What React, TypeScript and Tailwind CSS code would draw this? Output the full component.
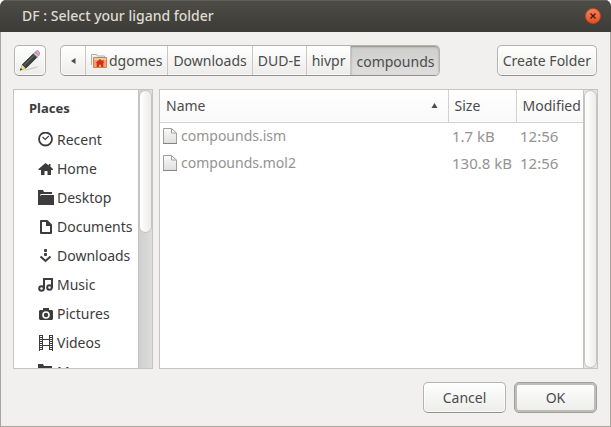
import React from "react";

const RecentIcon = () => (
  <svg width="16" height="16" viewBox="0 0 16 16" fill="none" stroke="#3c3c3c" aria-hidden="true">
    <circle cx="7.5" cy="7" r="6.5" strokeWidth="1.8" />
    <path d="M4.5 5 7.2 7.500 10.8 4" strokeWidth="1.1" />
  </svg>
);

const HomeIcon = () => (
  <svg width="16" height="16" viewBox="0 0 16 16" fill="#3c3c3c" aria-hidden="true">
    <path d="M7.5 2 .5 8v1H3v5h3.5v-4h3v4H13V9h2V8l-2.500-2.200V3H10.800v1.500z" />
  </svg>
);

const FolderIcon = () => (
  <svg width="16" height="16" viewBox="0 0 16 16" fill="#3c3c3c" aria-hidden="true">
    <path d="M0 0h5l1 2h8v2H3L2 5v9H0z" />
    <path d="M3 5H16v10H0v-1h2V6z" />
  </svg>
);

const DocumentIcon = () => (
  <svg width="16" height="16" viewBox="0 0 16 16" aria-hidden="true">
    <path d="M3 2h6l4 4v8H3z" fill="none" stroke="#3c3c3c" strokeWidth="2" strokeLinejoin="round" />
    <path d="M8 1.500 13.500 7H8z" fill="#3c3c3c" />
  </svg>
);

const DownloadIcon = () => (
  <svg width="16" height="16" viewBox="0 0 16 16" fill="#3c3c3c" aria-hidden="true">
    <rect x="6" y="1" width="3" height="3" rx="1" />
    <rect x="6" y="5" width="3" height="3" rx="1" />
    <path d="M2.500 8.500 7.500 13l5-4.500" fill="none" stroke="#3c3c3c" strokeWidth="2" />
  </svg>
);

const MusicIcon = () => (
  <svg width="16" height="16" viewBox="0 0 16 16" fill="none" stroke="#3c3c3c" strokeWidth="2" aria-hidden="true">
    <path d="M6 12V2h8v9" />
    <circle cx="3.500" cy="11.500" r="2.300" />
    <circle cx="11.500" cy="10.500" r="2.300" />
  </svg>
);

const CameraIcon = () => (
  <svg width="16" height="16" viewBox="0 0 16 16" fill="#3c3c3c" aria-hidden="true">
    <path d="M5 2h6v2h3l1 1v8l-1 1H2l-1-1V5l1-1h3z" />
    <circle cx="8" cy="9" r="3" fill="none" stroke="#fff" strokeWidth="1.600" />
  </svg>
);

const VideoIcon = () => (
  <svg width="16" height="16" viewBox="0 0 16 16" fill="none" stroke="#3c3c3c" aria-hidden="true">
    <path d="M1.500 0v16M4.500 0v15M11.500 0v15M14.500 0v16M4 4.500h8M4 10.500h8" />
    <path d="M3 0v16M13 0v16" strokeWidth="2" strokeDasharray="1 1" />
  </svg>
);

const PencilIcon = () => (
  <svg width="24" height="24" viewBox="0 0 24 24" aria-hidden="true">
    <path d="M4 22q10-4 17-5-3 3-17 5z" fill="#bdbdb9" opacity=".7" />
    <path d="M2 21.500 4.300 15.500 8 19.200z" fill="#f0e48f" stroke="#a79d55" strokeWidth=".6" />
    <path d="M2 21.500l.8-2.400 1.500 1.400z" fill="#222" />
    <path d="M4.300 15.500 15.500 4.700 19 8.200 8 19.200z" fill="#3d4040" stroke="#222" strokeWidth=".7" />
    <path d="M6.300 16.200 16.500 6" stroke="#757b7b" strokeWidth="1" />
    <path d="m15.500 4.700 1.700-1.700L20.700 6.500 19 8.200z" fill="#c6c9c7" stroke="#777" strokeWidth=".5" />
    <path d="m17.200 3 .6-.7q1.600-1.400 3 0t.5 3.400l-.6.8z" fill="#e4a3d5" stroke="#ad649e" strokeWidth=".6" />
  </svg>
);

const HomeFolderIcon = () => (
  <svg width="16" height="16" viewBox="0 0 16 16" aria-hidden="true">
    <path d="M.5 12V1.500h5l1 1.500h7v4" fill="#f3f3f1" stroke="#b0b0ab" />
    <path d="M2.500 4.500h13v10h-13z" fill="#f2a076" stroke="#dd7a50" />
    <path d="M3 5h12v2H3z" fill="#f8c3a4" />
    <path d="m9 6-4.500 4h1.200v4h2.300v-2.200h2V14h2.300v-4h1.200l-1-1V7h-1.200v1.200z" fill="#c6380f" />
  </svg>
);

const FileIcon = () => (
  <svg width="14" height="16" viewBox="0 0 14 16" aria-hidden="true">
    <defs>
      <linearGradient id="sheet" x1="0" y1="0" x2="0" y2="1">
        <stop offset="0" stopColor="#fafafa" />
        <stop offset="1" stopColor="#dedede" />
      </linearGradient>
    </defs>
    <path d="M.5.500h8l5 5v10H.5z" fill="url(#sheet)" stroke="#a09f9b" />
    <path d="M8.500.500v4.500h5z" fill="#fff" stroke="#a09f9b" strokeLinejoin="round" />
    <path d="M0 15.500h14" stroke="#858480" />
  </svg>
);

const places = [
  { label: "Recent", Icon: RecentIcon },
  { label: "Home", Icon: HomeIcon },
  { label: "Desktop", Icon: FolderIcon },
  { label: "Documents", Icon: DocumentIcon },
  { label: "Downloads", Icon: DownloadIcon },
  { label: "Music", Icon: MusicIcon },
  { label: "Pictures", Icon: CameraIcon },
  { label: "Videos", Icon: VideoIcon },
  { label: "Maps", Icon: FolderIcon },
];

const files = [
  { name: "compounds.ism", size: "1.7 kB", modified: "12:56" },
  { name: "compounds.mol2", size: "130.8 kB", modified: "12:56" },
];

const button =
  "h-[31px] rounded-[5px] border border-[#b4b3ae] border-b-[#92918d] bg-linear-to-b from-white to-[#ececea] shadow-[inset_0_0_0_1px_#ffffffb0]";
const crumb = "flex h-full items-center border-r border-[#c9c8c5] px-[5px]";

export default function App() {
  return (
    <div className="bg-white">
      <div className="flex h-screen flex-col overflow-hidden rounded-t-[6px] bg-[#f1f0ee] font-['Noto_Sans',sans-serif] text-[14px] leading-5 text-[#4c4c4c]">
        <header className="flex h-8 shrink-0 items-center justify-between bg-linear-to-b from-[#4d4c46] to-[#3c3b37] pr-2.5 pl-[22px] shadow-[inset_0_1px_0_#5f5e58]">
          <h1 className="font-medium text-[#dfdbd2]">DF : Select your ligand folder</h1>
          <button aria-label="Close" className="flex size-4 items-center justify-center rounded-full border border-[#c9441c] bg-linear-to-b from-[#f58260] to-[#e2501d]">
            <svg width="6" height="6" viewBox="0 0 6 6" stroke="#3b1c12" strokeWidth="1.200" aria-hidden="true">
              <path d="m.5.500 5 5M5.500.500l-5 5" />
            </svg>
          </button>
        </header>

        <main className="flex min-h-0 flex-1 flex-col gap-[13px] border-x border-b border-[#a9a6a0] px-3 py-[13px]">
          <div className="flex items-center px-px">
            <button aria-label="Type a file name" className={`${button} flex w-8 items-center justify-center`}>
              <PencilIcon />
            </button>
            <nav aria-label="Folder path" className={`${button} ml-3.5 flex items-center overflow-hidden`}>
              <button aria-label="Back" className="flex h-full w-[25px] items-center justify-center border-r border-[#c9c8c5]">
                <svg width="5" height="6" viewBox="0 0 5 6" fill="#4c4c4c" aria-hidden="true">
                  <path d="M4.500 0v6L0 3z" />
                </svg>
              </button>
              <button className={`${crumb} gap-0.5`}>
                <HomeFolderIcon />
                dgomes
              </button>
              <button className={crumb}>Downloads</button>
              <button className={crumb}>DUD-E</button>
              <button className={crumb}>hivpr</button>
              <button aria-current="page" className="flex h-full items-center rounded-r-[4px] bg-linear-to-b from-[#cdcdcb] to-[#dededc] px-[5px] pt-0.5 shadow-[inset_0_1px_2px_#8c8c88]">
                compounds
              </button>
            </nav>
            <button className={`${button} ml-auto px-[5px]`}>Create Folder</button>
          </div>

          <div className="flex min-h-0 flex-1 gap-1.5">
            <aside className="flex w-[140px] shrink-0 overflow-hidden border border-[#c5c4c0] bg-white">
              <div className="min-w-0 flex-1 overflow-hidden text-[#3c3c3c]">
                <h2 className="flex h-[35px] items-center pl-[15px] text-[13px] font-bold">Places</h2>
                <ul>
                  {places.map(({ label, Icon }) => (
                    <li key={label}>
                      <button className="flex h-[29px] w-full items-center gap-[3px] pl-6">
                        <Icon />
                        {label}
                      </button>
                    </li>
                  ))}
                </ul>
              </div>
              <div className="w-3.5 shrink-0 border-l border-[#c5c4c0] bg-linear-to-r from-[#cfcfcd] to-[#dddddb]">
                <div className="h-[143px] rounded-full border border-[#c5c4c0] bg-linear-to-r from-white to-[#ececea]" />
              </div>
            </aside>

            <section className="flex min-w-0 flex-1 border border-[#c5c4c0] bg-white">
              <div className="min-w-0 flex-1">
                <table className="w-full table-fixed border-collapse text-left">
                  <colgroup>
                    <col />
                    <col className="w-[68px]" />
                    <col className="w-[67px]" />
                  </colgroup>
                  <thead>
                    <tr className="h-8 border-b border-[#d3d2cf] bg-linear-to-b from-white to-[#f9f9f9]">
                      <th className="border-r border-[#d3d2cf] px-1.5 font-normal">
                        <span className="flex items-center justify-between pr-1">
                          Name
                          <svg width="7" height="5" viewBox="0 0 7 5" fill="#4c4c4c" aria-hidden="true">
                            <path d="M3.500 0 6.500 5H.5z" />
                          </svg>
                        </span>
                      </th>
                      <th className="border-r border-[#d3d2cf] px-1.5 font-normal">Size</th>
                      <th className="px-1.5 font-normal">Modified</th>
                    </tr>
                  </thead>
                  <tbody className="text-[#949390]">
                    {files.map((file) => (
                      <tr key={file.name} className="h-[27px]">
                        <td className="px-[3px]">
                          <span className="flex items-center gap-1">
                            <FileIcon />
                            {file.name}
                          </span>
                        </td>
                        <td className="px-1 text-[15px] whitespace-nowrap">{file.size}</td>
                        <td className="px-1 text-[15px]">{file.modified}</td>
                      </tr>
                    ))}
                  </tbody>
                </table>
              </div>
              <div className="w-3.5 shrink-0 border-l border-[#c5c4c0] bg-[#e4e4e2]">
                <div className="h-full rounded-full border border-[#c5c4c0] bg-linear-to-r from-white to-[#ececea]" />
              </div>
            </section>
          </div>

          <footer className="flex justify-end gap-2 px-px">
            <button className={`${button} w-[83px]`}>Cancel</button>
            <button className="h-[31px] w-[83px] rounded-[5px] border border-[#a09f9b] bg-linear-to-b from-white to-[#ececea] shadow-[inset_0_0_0_2px_#bdbdba]">
              OK
            </button>
          </footer>
        </main>
      </div>
    </div>
  );
}
